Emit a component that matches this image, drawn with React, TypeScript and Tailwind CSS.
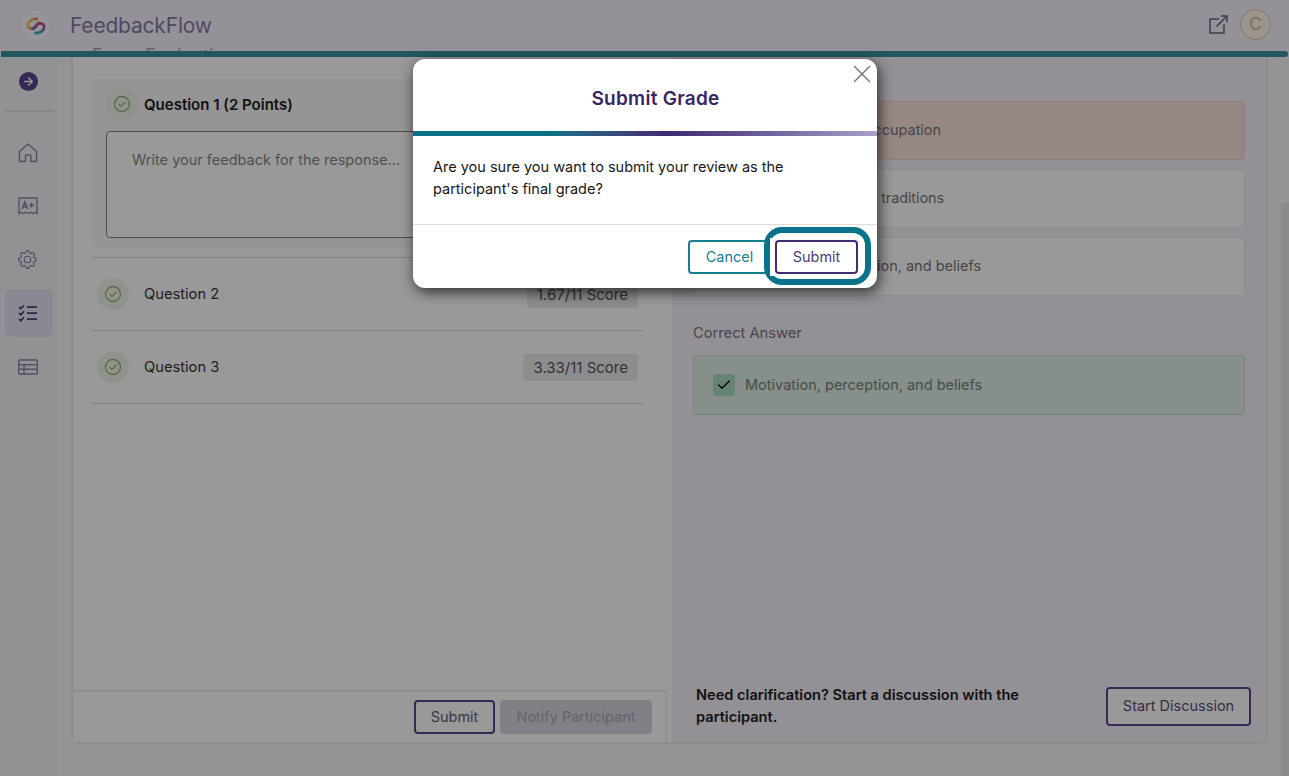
import type { ReactNode } from 'react';
import { ArrowRight, Check, X } from 'lucide-react';
import { BsGear } from 'react-icons/bs';

const questions = [
  { title: 'Question 2', score: '1.67/11 Score' },
  { title: 'Question 3', score: '3.33/11 Score' }
];

const answers = [
  { label: 'Age, gender, and occupation', style: 'border-[#f5d0ca] bg-[#fae1dc] tracking-[-0.030px]' },
  { label: 'Customs and family traditions', style: 'border-[#efeaf2] bg-white tracking-[-0.120px]' },
  { label: 'Motivation, perception, and beliefs', style: 'border-[#efeaf2] bg-white' }
];

function Logo() {
  return (
    <div className="flex h-[33px] w-[33px] items-center justify-center rounded-full border border-[#eeeaf4] bg-[#fbf9ff]">
      <svg width="20" height="18" viewBox="0 0 20 18" fill="none" strokeLinecap="round">
        <defs>
          <linearGradient id="warm" x1="0" y1="0.300" x2="1" y2="0.600">
            <stop offset="0" stopColor="#f4d860" />
            <stop offset="0.5" stopColor="#f09060" />
            <stop offset="1" stopColor="#e05070" />
          </linearGradient>
          <linearGradient id="cool" x1="0.500" y1="0" x2="0.300" y2="1">
            <stop offset="0" stopColor="#d85088" />
            <stop offset="0.5" stopColor="#7868c8" />
            <stop offset="1" stopColor="#48b8c0" />
          </linearGradient>
        </defs>
        <path d="M10.500 2C5.500 1.500 1.800 4.800 1.800 8c0 3.700 4.200 4.500 6.800 2.500C10.500 9 10.800 6.800 13 6" stroke="url(#warm)" strokeWidth="2.800" />
        <path d="M9.500 16c5 .5 8.700-2.800 8.700-6 0-3.700-4.200-4.500-6.800-2.500C9.500 9 9.200 11.200 7 12" stroke="url(#cool)" strokeWidth="2.800" />
      </svg>
    </div>
  );
}

function HomeIcon() {
  return (
    <svg width="20" height="20" viewBox="0 0 20 20" fill="none" stroke="#8d83a8" strokeWidth="1.400" strokeLinejoin="round">
      <path d="M1.500 8.500 10 1l8.500 7.500v10H13V13a1 1 0 0 0-1-1H8.500a1 1 0 0 0-1 1v5.500h-6z" />
    </svg>
  );
}

function GradeIcon() {
  return (
    <svg width="20" height="18" viewBox="0 0 20 18" fill="none" stroke="#8d83a8" strokeWidth="1.400">
      <path d="M1 16.500V1h18v15.500l-2-1.300-2.300 1.300-2.300-1.300-2.400 1.300-2.300-1.300-2.300 1.300L3 15.200z" />
      <path d="m4 12 2.800-7 2.800 7M5 9.600h3.600M11 8.300h5M13.500 5.800v5" strokeWidth="1.600" />
    </svg>
  );
}

function ChecklistIcon() {
  return (
    <svg width="20" height="18" viewBox="0 0 20 18" fill="none" stroke="#503c80" strokeWidth="1.700">
      <path d="m1 3 1.800 1.700L6 1.200M1 9l1.800 1.700L6 7.200M1 15l1.800 1.700L6 13.200M9 3.200h10M9 9.200h10M9 15.200h10" />
    </svg>
  );
}

function TableIcon() {
  return (
    <svg width="20" height="16" viewBox="0 0 20 16" fill="none" stroke="#8d83a8" strokeWidth="1.400">
      <rect x="0.700" y="1" width="18.600" height="14" rx="1" />
      <path d="M.7 5.700h18.600M.7 10.300h18.600M6 5.700V15" />
    </svg>
  );
}

function StatusMark() {
  return (
    <span className="flex h-8 w-8 shrink-0 items-center justify-center rounded-full bg-[#f0f6e8]">
      <svg width="18" height="18" viewBox="0 0 18 18" fill="none" stroke="#98b078" strokeWidth="1.300">
        <circle cx="9" cy="9" r="7.500" />
        <path d="m5.700 9.200 2.300 2.200 4.400-4.600" />
      </svg>
    </span>
  );
}

function SideItem({ active, children }: { active?: boolean; children: ReactNode }) {
  return (
    <div className={`flex h-12 w-12 items-center justify-center rounded-md pr-[2px] ${active ? 'bg-[#e7e4f6]' : ''}`}>
      {children}
    </div>
  );
}

function Header() {
  return (
    <header className="relative flex h-[51px] shrink-0 items-center overflow-hidden bg-[#f7f4fd] pl-[19px] pr-[18px]">
      {/* Page heading scrolled under the bar */}
      <span className="absolute left-[92px] top-[45px] whitespace-nowrap text-[18px] leading-[22px] tracking-[0.300px] text-[#aaa6ae]">Exam Evaluation</span>
      <Logo />
      <h1 className="ml-[18px] text-[21px] tracking-[-0.200px] text-[#8878a4]">FeedbackFlow</h1>
      <div className="ml-auto flex items-center gap-3">
        <svg width="19" height="19" viewBox="0 0 19 19" fill="none" stroke="#6b6678" strokeWidth="1.500" className="relative -top-px">
          <path d="M10 4H1v14h14V9M7.500 11.500 17.800 1.200M12 1h6v6" />
        </svg>
        <span className="relative -top-px flex h-[31px] w-[31px] items-center justify-center rounded-full border-[1.500px] border-[#e2c294] bg-[#fff8ea] text-[17px] text-[#d8b47c]">
          C
        </span>
      </div>
    </header>
  );
}

function Sidebar() {
  return (
    <nav className="flex w-[57px] shrink-0 flex-col items-center bg-[#f0f4f7] pl-px">
      <div className="flex h-[55px] w-[49px] items-center justify-center border-b-2 border-[#dcdfe4] pb-[5px] pr-px">
        <span className="flex h-[19px] w-[19px] items-center justify-center rounded-full bg-[#5c4390] text-white">
          <ArrowRight size={13} strokeWidth={2.5} />
        </span>
      </div>
      <div className="mt-[17px] flex flex-col gap-[5.400px] pr-px">
        <SideItem><HomeIcon /></SideItem>
        <SideItem><GradeIcon /></SideItem>
        <SideItem><BsGear size={19} className="text-[#8d83a8]" /></SideItem>
        <SideItem active><ChecklistIcon /></SideItem>
        <SideItem><TableIcon /></SideItem>
      </div>
    </nav>
  );
}

function ReviewPanel() {
  return (
    <section className="flex w-[599px] shrink-0 flex-col bg-white">
      <div className="flex-1 pl-[19px] pt-[22px]">
        <div className="h-[169px] w-[551px] rounded-md bg-[#f9f9f9] px-[14px] pt-[9px]">
          <div className="flex items-center gap-[6px]">
            <StatusMark />
            <h2 className="pt-[3px] text-[15px] font-semibold text-[#202020]">Question 1 (2 Points)</h2>
          </div>
          <div className="mt-[11px] h-[107px] rounded border border-[#808080] bg-white px-[25px] pt-[17px] text-[14.500px] leading-[22px] text-[#858585]">
            Write your feedback for the response...
          </div>
        </div>
        <div className="mt-[9px] w-[551px] border-t border-[#d4d4d4]">
          {questions.map((q) => (
            <div key={q.title} className="flex h-[73px] items-center border-b border-[#d4d4d4] px-[5px]">
              <StatusMark />
              <span className="ml-[15px] text-[14.700px] text-[#353535]">{q.title}</span>
              <span className="ml-auto rounded bg-[#ebebed] px-[10px] py-[2px] text-[15px] leading-[23px] text-[#55535f]">
                {q.score}
              </span>
            </div>
          ))}
        </div>
      </div>
      <div className="flex h-[52px] w-[594px] items-center justify-end gap-[5px] border-r border-t-2 border-[#e9e9e9] pr-[14px]">
        <button className="h-[34px] w-[81px] rounded border-2 border-[#5c4390] text-[14.500px] text-[#665a80]">Submit</button>
        <button className="h-[34px] w-[152px] rounded bg-[#d8d5e0] text-[14.500px] text-[#aaa6b5]">Notify Participant</button>
      </div>
    </section>
  );
}

function AnswerPanel() {
  return (
    <section className="flex flex-1 flex-col rounded-br-lg bg-[#f7f2fb] pl-[21px] pr-[15px] text-[14.500px]">
      <div className="mt-[44px] flex w-[552px] flex-col gap-[9px]">
        {answers.map((a) => (
          <div key={a.label} className={`flex h-[59px] items-center rounded border pb-[2px] pl-[50px] text-[#77747a] ${a.style}`}>
            {a.label}
          </div>
        ))}
      </div>
      <p className="mt-[26px] text-[14.700px] leading-[22px] text-[#77747a]">Correct Answer</p>
      <div className="mt-[11px] flex h-[60px] w-[552px] items-center rounded border border-[#c8dccf] bg-[#e0efe6] pl-[19px] text-[#77807a]">
        <span className="mr-[10px] flex h-[22px] w-[22px] items-center justify-center rounded bg-[#a9dcc0] text-black">
          <Check size={16} strokeWidth={2} />
        </span>
        Motivation, perception, and beliefs
      </div>
      <div className="mb-[14px] mt-auto flex items-center justify-between pl-[3px]">
        <p className="w-[350px] text-[14.600px] font-semibold leading-[22px] text-[#202020]">
          Need clarification? Start a discussion with the participant.
        </p>
        <button className="h-[39px] w-[145px] rounded border-2 border-[#5c4390] bg-white text-[#5a4d75]">Start Discussion</button>
      </div>
    </section>
  );
}

function SubmitDialog() {
  return (
    <div className="absolute left-[413px] top-[59px] h-[229px] w-[464px] overflow-hidden rounded-xl bg-white shadow-[2px_4px_14px_rgba(0,0,0,0.7)]">
      <X size={30} strokeWidth={1.1} className="absolute right-0 top-0 text-[#777777]" />
      <div className="flex h-[72px] items-center justify-center pl-[21px] pt-[9px]">
        <h2 className="text-[19px] font-semibold tracking-[0.25px] text-[#3a2463]">Submit Grade</h2>
      </div>
      <div className="h-[5px] bg-linear-to-r from-[#0b7186] from-30% via-[#3f2a70] via-55% to-[#aaa0c8]" />
      <p className="h-[89px] whitespace-nowrap border-b border-[#dedede] pl-[20px] pt-[20px] text-[14.500px] leading-[22px] text-[#181818]">
        Are you sure you want to submit your review as the
        <br />
        participant's final grade?
      </p>
      <div className="flex pl-[275px] pt-[15px] text-[14.500px]">
        <button className="h-[34px] w-[83px] rounded border-2 border-[#178090] text-[#178090]">Cancel</button>
        <button className="ml-[4px] h-[34px] w-[83px] rounded border-2 border-[#432c70] text-[#4f3b78]">Submit</button>
      </div>
      {/* Focus ring around the confirm button */}
      <div className="absolute left-[351px] top-[168px] h-[58px] w-[107px] rounded-[18px] border-[6px] border-[#08738b]" />
      <div className="absolute left-[357px] top-[179px] h-[38px] w-[4px] bg-white" />
    </div>
  );
}

export default function App() {
  return (
    <div className="relative flex h-[776px] w-[1289px] flex-col overflow-hidden bg-[#f7f7f7] font-['Inter',sans-serif]">
      <Header />
      <div className="mx-px h-[6px] shrink-0 rounded-r-full bg-[#3b929f]" />
      <div className="flex min-h-0 flex-1">
        <Sidebar />
        <main className="mb-[32px] ml-[14px] flex w-[1197px] rounded-b-lg border-x-2 border-b-2 border-[#e9e9eb]">
          <ReviewPanel />
          <AnswerPanel />
        </main>
        <div className="ml-auto mt-[146px] w-[8px] bg-[#e8e8e8]" />
      </div>
      <div className="absolute inset-0 bg-black/40" />
      <SubmitDialog />
    </div>
  );
}
